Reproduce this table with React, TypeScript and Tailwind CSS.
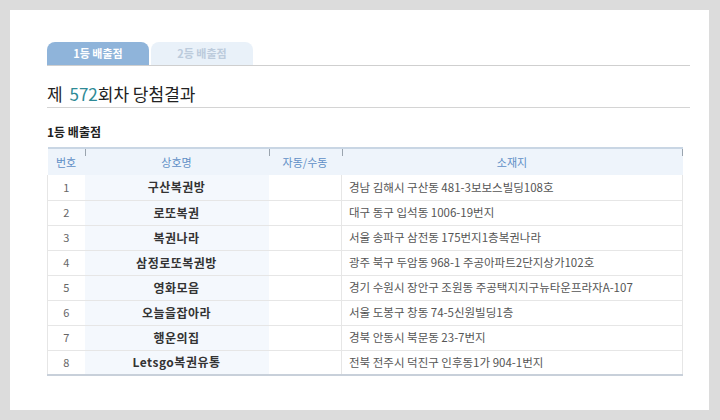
import React from 'react';

interface Shop {
  no: number;
  name: string;
  type: string;
  addr: string;
}

const shops: Shop[] = [
  { no: 1, name: '구산복권방', type: '', addr: '경남 김해시 구산동 481-3보보스빌딩108호' },
  { no: 2, name: '로또복권', type: '', addr: '대구 동구 입석동 1006-19번지' },
  { no: 3, name: '복권나라', type: '', addr: '서울 송파구 삼전동 175번지1층복권나라' },
  { no: 4, name: '삼정로또복권방', type: '', addr: '광주 북구 두암동 968-1 주공아파트2단지상가102호' },
  { no: 5, name: '영화모음', type: '', addr: '경기 수원시 장안구 조원동 주공택지지구뉴타운프라자A-107' },
  { no: 6, name: '오늘을잡아라', type: '', addr: '서울 도봉구 창동 74-5신원빌딩1층' },
  { no: 7, name: '행운의집', type: '', addr: '경북 안동시 북문동 23-7번지' },
  { no: 8, name: 'Letsgo복권유통', type: '', addr: '전북 전주시 덕진구 인후동1가 904-1번지' },
];

const font = { fontFamily: '"Noto Sans CJK KR", "Noto Sans", sans-serif' };

const Tick = ({ right }: { right?: boolean }) => (
  <span className={`absolute top-0 ${right ? 'right-0' : 'left-0'} w-px h-[7px] bg-[#9aa4ae]`} />
);

export default function App() {
  return (
    <div className="w-[720px] h-[420px] bg-[#dcdcdc] pt-[10px] pl-[10px] pr-[11px] pb-[10px]" style={font}>
      <div className="w-[699px] h-[400px] bg-white pt-[32px] pl-[37px] pr-[19px]">
        {/* Tabs */}
        <div className="flex gap-[2px] border-b border-[#cfcfcf]">
          <div className="w-[102px] h-[23px] rounded-t-[8px] bg-[#8fb4da] text-white text-[11px] font-bold flex items-center justify-center">
            1등 배출점
          </div>
          <div className="w-[102px] h-[23px] rounded-t-[8px] bg-[#e9f1f9] text-[#bccbdc] text-[11px] font-bold flex items-center justify-center">
            2등 배출점
          </div>
        </div>

        {/* Title */}
        <div className="h-[42px] border-b border-[#d4d4d4] flex items-end pb-[1px]">
          <h1 className="text-[17px] text-[#222] leading-[24px]">
            제 <span className="text-[#2e8a96] ml-[3px]">572</span>회차 당첨결과
          </h1>
        </div>

        <h2 className="mt-[15px] text-[12px] font-bold text-[#222] leading-[18px]">1등 배출점</h2>

        {/* Table */}
        <table className="mt-[6px] w-[635px] border-collapse table-fixed text-[11px]">
          <colgroup>
            <col className="w-[37px]" />
            <col className="w-[184px]" />
            <col className="w-[73px]" />
            <col className="w-[341px]" />
          </colgroup>
          <thead>
            <tr className="h-[27px] bg-[#eef4fb] border-t-2 border-[#c9d6e4] text-[#5f8fc6]">
              <th className="font-normal relative">번호</th>
              <th className="font-normal relative"><Tick />상호명</th>
              <th className="font-normal relative"><Tick />자동/수동</th>
              <th className="font-normal relative"><Tick /><Tick right />소재지</th>
            </tr>
          </thead>
          <tbody>
            {shops.map((s, i) => (
              <tr
                key={s.no}
                className={`h-[25px] ${i === shops.length - 1 ? 'border-b-2 border-[#c8d0da]' : 'border-b border-[#e6e6e6]'}`}
              >
                <td className="text-center text-[#666] border-l border-[#e6e6e6]">{s.no}</td>
                <td className="text-center bg-[#f4f8fd] text-[#333] font-semibold tracking-[0.5px] text-[12px]">{s.name}</td>
                <td className="text-center text-[#666] border-r border-[#e6e6e6]">{s.type}</td>
                <td className="pl-[7px] text-[#555] text-[11.5px] border-r border-[#e6e6e6] whitespace-nowrap">{s.addr}</td>
              </tr>
            ))}
          </tbody>
        </table>
      </div>
    </div>
  );
}
